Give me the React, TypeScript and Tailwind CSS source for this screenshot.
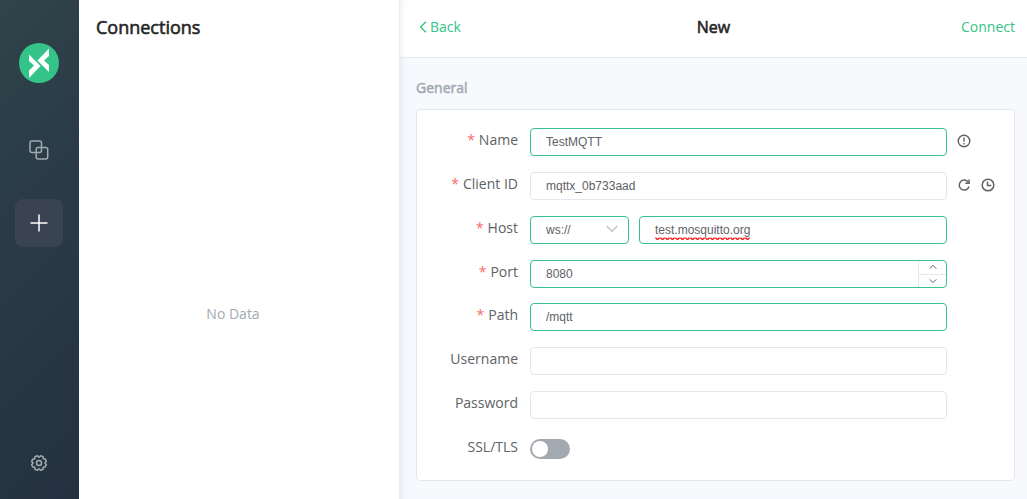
import { useState } from 'react';
import type { ReactNode } from 'react';

const inputBase =
  'block h-7 w-full min-w-0 rounded border bg-white px-[15px] font-[Liberation_Sans,sans-serif] text-xs text-[#606266] outline-none';
const plain = 'border-[#e4e7ed]';
const green = 'border-[#34c388]';

function Logo() {
  return (
    <svg className="size-10" viewBox="0 0 40 40" aria-label="MQTTX">
      <circle cx="20" cy="20" r="20" fill="#34c388" />
      <path d="M10 11.500 21.500 23 10 35V27.500L15 22.500 10 18Z" fill="#fff" />
      <path d="M30 5.500V13L25 17.500 30 22V29L18.500 17.500Z" fill="#fff" />
    </svg>
  );
}

function CopyIcon() {
  return (
    <svg className="size-5" viewBox="0 0 20 20" fill="none" stroke="currentColor" strokeWidth="1.500">
      <rect x="1" y="1" width="11.500" height="11.500" rx="2" />
      <rect x="7.200" y="7.500" width="11.500" height="11.500" rx="2" />
    </svg>
  );
}

function PlusIcon() {
  return (
    <svg className="size-5" viewBox="0 0 20 20" fill="none" stroke="currentColor" strokeWidth="1.500">
      <path d="M10 1.500v17M1.500 10h17" />
    </svg>
  );
}

const gearOutline = Array.from({ length: 8 }, (_, tooth) =>
  [
    [4, 6.100],
    [12, 7.500],
    [33, 7.500],
    [41, 6.100],
  ].map(([deg, r]) => {
    const a = ((tooth * 45 + deg) * Math.PI) / 180;
    return `${(9 + r * Math.cos(a)).toFixed(2)},${(9 + r * Math.sin(a)).toFixed(2)}`;
  }),
)
  .flat()
  .join(' ');

function GearIcon() {
  return (
    <svg className="size-[18px]" viewBox="0 0 18 18" fill="none" stroke="currentColor" strokeWidth="1.500" strokeLinejoin="round">
      <polygon points={gearOutline} />
      <circle cx="9" cy="9" r="2.500" />
    </svg>
  );
}

function WarningIcon() {
  return (
    <svg className="size-3.5" viewBox="0 0 14 14" fill="none" stroke="currentColor" strokeWidth="1.400">
      <circle cx="7" cy="7" r="5.800" />
      <path d="M7 3.600v4.200M7 8.900v1.500" />
    </svg>
  );
}

function RefreshIcon() {
  return (
    <svg className="size-3.5" viewBox="0 0 14 14" fill="none" stroke="currentColor" strokeWidth="1.500">
      <path d="M11.300 4.200A5 5 0 1 0 12 8.500" />
      <path d="M12.100 1.500v3.700H8.300" />
    </svg>
  );
}

function ClockIcon() {
  return (
    <svg className="size-3.5" viewBox="0 0 14 14" fill="none" stroke="currentColor" strokeWidth="1.500">
      <circle cx="7" cy="7" r="5.800" />
      <path d="M6.500 3.500v4h3.800" />
    </svg>
  );
}

function Chevron({ d, className }: { d: string; className: string }) {
  return (
    <svg className={className} viewBox="0 0 12 12" fill="none" stroke="currentColor" strokeWidth="1.200">
      <path d={d} />
    </svg>
  );
}

function Squiggle() {
  return (
    <svg className="pointer-events-none absolute top-[21px] left-4 h-[3px] w-24" viewBox="0 0 96 3" fill="none" stroke="#ff0000" strokeWidth="1.200">
      <path d={Array.from({ length: 19 }, (_, i) => `M${i * 5 + 0.5} .6q2 3.400 4 0`).join('')} />
    </svg>
  );
}

type RowProps = { id: string; label: string; required?: boolean; children: ReactNode; actions?: ReactNode };

function Row({ id, label, required, children, actions }: RowProps) {
  return (
    <div className="flex h-7">
      <label htmlFor={id} className="w-[101px] shrink-0 pr-3 text-right text-sm leading-6 text-[#606266]">
        {required && <span className="mr-1 text-[#f56c6c]">*</span>}
        {label}
      </label>
      <div className="flex min-w-0 flex-1 items-center gap-2.5">{children}</div>
      <div className="flex w-[67px] shrink-0 items-center gap-2.5 pb-0.5 pl-2.5 text-[#606266]">{actions}</div>
    </div>
  );
}

export default function App() {
  const [port, setPort] = useState(8080);
  return (
    <div className="flex min-h-screen bg-white font-[Open_Sans,sans-serif] text-sm">
      <nav className="flex w-[79px] shrink-0 flex-col items-center bg-linear-[135deg,#30444a_0%,#2b3d48_30%,#253140_100%] pt-[43px] pr-0.5 pb-[27px] text-[#a2a9b0]">
        <Logo />
        <button type="button" aria-label="Connections" className="mt-[43px] flex size-12 items-center justify-center">
          <CopyIcon />
        </button>
        <button type="button" aria-label="New connection" className="mt-[25px] flex size-12 items-center justify-center rounded-lg bg-[#394351] text-white">
          <PlusIcon />
        </button>
        <button type="button" aria-label="Settings" className="mt-auto">
          <GearIcon />
        </button>
      </nav>

      <section className="flex w-80 shrink-0 flex-col">
        <h1 className="px-[17px] pt-[13px] text-lg leading-7 font-normal text-[#262626] [-webkit-text-stroke:0.6px_#262626]">Connections</h1>
        <p className="mt-[261px] pr-3 text-center text-sm leading-6 text-[#a2a9b0]">No Data</p>
      </section>

      <main className="flex min-w-0 flex-1 flex-col bg-[#f8f9fd] shadow-[inset_7px_0_6px_-5px_#e0e4ee]">
        <header className="ml-px grid grid-cols-[1fr_auto_1fr] items-center border-b border-[#e4e7ed] bg-white pt-[13px] pr-3 pb-4 pl-4 shadow-[inset_6px_0_6px_-5px_#e8ebf4]">
          <a href="#back" className="flex items-center text-[#34c388]">
            <Chevron d="M8.500 1.500 4 6l4.500 4.500" className="size-3.5" />
            Back
          </a>
          <h2 className="pr-1 text-base leading-7 font-normal text-[#262626] [-webkit-text-stroke:0.6px_#262626]">New</h2>
          <a href="#connect" className="justify-self-end text-[#34c388]">Connect</a>
        </header>

        <form className="pr-3 pb-[18px] pl-[17px]" onSubmit={(e) => e.preventDefault()}>
          <h3 className="pt-[18px] pb-[9px] text-sm leading-6 font-normal text-[#a2a9b0] [-webkit-text-stroke:0.5px_#a2a9b0]">General</h3>
          <div className="rounded border border-[#e4e7ed] bg-white pt-[18px] pb-[17px] pl-3">
            <div className="flex flex-col gap-4">
              <Row id="name" label="Name" required actions={<button type="button" aria-label="Name help"><WarningIcon /></button>}>
                <input id="name" className={`${inputBase} ${green}`} defaultValue="TestMQTT" />
              </Row>
              <Row
                id="client"
                label="Client ID"
                required
                actions={
                  <>
                    <button type="button" aria-label="Refresh"><RefreshIcon /></button>
                    <button type="button" aria-label="Use timestamp"><ClockIcon /></button>
                  </>
                }
              >
                <input id="client" className={`${inputBase} ${plain}`} defaultValue="mqttx_0b733aad" />
              </Row>
              <Row id="host" label="Host" required>
                <div className="relative w-[99px] shrink-0">
                  <select aria-label="Protocol" className={`${inputBase} ${green} appearance-none`} defaultValue="ws://">
                    <option>ws://</option>
                    <option>mqtt://</option>
                  </select>
                  <Chevron d="M1.500 3.500 6 8 10.500 3.500" className="pointer-events-none absolute top-1.5 right-2.5 size-3.5 text-[#c0c4cc]" />
                </div>
                <div className="relative min-w-0 flex-1">
                  <input id="host" spellCheck={false} className={`${inputBase} ${green}`} defaultValue="test.mosquitto.org" />
                  <Squiggle />
                </div>
              </Row>
              <Row id="port" label="Port" required>
                <div className={`flex h-7 w-full overflow-hidden rounded border bg-white ${green}`}>
                  <input
                    id="port"
                    inputMode="numeric"
                    className="min-w-0 flex-1 px-[15px] font-[Liberation_Sans,sans-serif] text-xs text-[#606266] outline-none"
                    value={port}
                    onChange={(e) => setPort(Number(e.target.value) || 0)}
                  />
                  <div className="flex w-7 flex-col border-l border-[#e4e7ed] text-[#606266]">
                    <button type="button" aria-label="Increase port" className="flex flex-1 items-center justify-center border-b border-[#e4e7ed]" onClick={() => setPort(port + 1)}>
                      <Chevron d="M2 8 6 4 10 8" className="size-2.5" />
                    </button>
                    <button type="button" aria-label="Decrease port" className="flex flex-1 items-center justify-center" onClick={() => setPort(port - 1)}>
                      <Chevron d="M2 4 6 8 10 4" className="size-2.5" />
                    </button>
                  </div>
                </div>
              </Row>
            </div>
            <div className="mt-[15px] flex flex-col gap-4">
              <Row id="path" label="Path" required>
                <input id="path" className={`${inputBase} ${green}`} defaultValue="/mqtt" />
              </Row>
              <Row id="user" label="Username">
                <input id="user" className={`${inputBase} ${plain}`} />
              </Row>
              <Row id="pass" label="Password">
                <input id="pass" type="password" className={`${inputBase} ${plain}`} />
              </Row>
              <Row id="ssl" label="SSL/TLS">
                <input
                  id="ssl"
                  type="checkbox"
                  role="switch"
                  className="flex h-5 w-10 appearance-none items-center rounded-full bg-[#a2a9b0] px-0.5 before:size-4 before:rounded-full before:bg-white checked:justify-end checked:bg-[#34c388]"
                />
              </Row>
            </div>
          </div>
        </form>
      </main>
    </div>
  );
}
